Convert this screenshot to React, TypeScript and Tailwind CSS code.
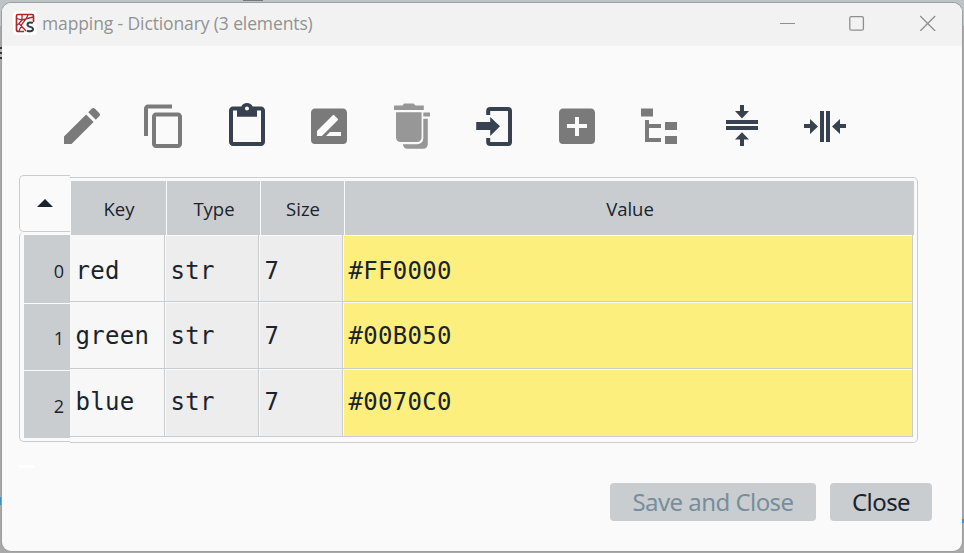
import type { ReactNode } from "react";

type Tone = "muted" | "faint" | "strong";

const toneClass: Record<Tone, string> = {
  muted: "text-[#7a7a7a]",
  faint: "text-[#979797]",
  strong: "text-[#37414f]",
};

const tools: { name: string; tone: Tone; box: number; art: ReactNode }[] = [
  {
    name: "Edit",
    tone: "muted",
    box: 24,
    art: (
      <path d="M3 17.25V21h3.75L17.81 9.94l-3.75-3.75L3 17.25zM20.71 7.04c.39-.39.39-1.02 0-1.41l-2.34-2.34c-.39-.39-1.02-.39-1.41 0l-1.83 1.83 3.75 3.75 1.83-1.83z" />
    ),
  },
  {
    name: "Copy",
    tone: "muted",
    box: 24,
    art: (
      <path d="M16 1.300H4c-1.100 0-2 .9-2 2v13.700h2V3.300h12v-2zm3 4H8c-1.100 0-2 .9-2 2V21c0 1.100.9 2 2 2h11c1.100 0 2-.9 2-2V7.300c0-1.100-.9-2-2-2zm0 15.700H8V7.300h11V21z" />
    ),
  },
  {
    name: "Paste",
    tone: "strong",
    box: 24,
    art: (
      <path d="M19 2.3h-4.18C14.4 1.1 13.3.5 12 .5c-1.3 0-2.4.6-2.82 1.8H5c-1.1 0-2 .9-2 2V20c0 1.1.9 2 2 2h14c1.1 0 2-.9 2-2V4.3c0-1.1-.9-2-2-2zm-7 0c.55 0 1 .45 1 1s-.45 1-1 1-1-.45-1-1 .45-1 1-1zM19 20H5V4.3h2v3.1h10V4.3h2V20z" />
    ),
  },
  {
    name: "Rename",
    tone: "muted",
    box: 24,
    art: (
      <path
        fillRule="evenodd"
        d="M18 17h-7.5l2-2H18zM6 17v-2.5l7.88-7.85c.19-.2.51-.2.71 0l1.76 1.76c.2.2.2.51 0 .71L8.47 17zM19 3.3H5c-1.1 0-2 .9-2 2V19a2 2 0 0 0 2 2h14a2 2 0 0 0 2-2V5.3c0-1.1-.9-2-2-2z"
      />
    ),
  },
  {
    name: "Remove",
    tone: "faint",
    box: 48,
    art: (
      <>
        <path d="M6 3.5h8.5l1.5-2h9.5l2 2h8.3v4.4H6zM8 10.2h25.6v25.3a4.5 4.5 0 0 1-4.5 4.5H12.500a4.500 4.500 0 0 1-4.500-4.500z" />
        <path d="M35.300 10.400h6.700v4.200h-6.700zM35.300 16.700h4.500V42.300a4.500 4.500 0 0 1-4.500 4.500H19.500a4.500 4.500 0 0 1-4.500-4.500h14.300a6 6 0 0 0 6-6z" />
      </>
    ),
  },
  {
    name: "Insert",
    tone: "strong",
    box: 48,
    art: (
      <>
        <path d="M16.200 13V9A4 4 0 0 1 20.200 5H38A4 4 0 0 1 42 9V40A4 4 0 0 1 38 44H20.200A4 4 0 0 1 16.200 40V36H20.200V40H38V9H20.200V13z" />
        <path d="M6.200 20H20.200V15L30 24.300 20.200 34V28H6.200z" />
      </>
    ),
  },
  {
    name: "Add",
    tone: "muted",
    box: 24,
    art: (
      <path d="M17 13h-4v4h-2v-4H7v-2h4V7.500h2V11h4zM19 3.300H5c-1.100 0-2 .9-2 2V19a2 2 0 0 0 2 2h14a2 2 0 0 0 2-2V5.300c0-1.100-.9-2-2-2z" fillRule="evenodd" />
    ),
  },
  {
    name: "View as tree",
    tone: "muted",
    box: 24,
    art: <path d="M3 3.300h6v4H3zM15 10h6v4h-6zM15 17h6v4h-6zM13 13H7v5h6v2H5V9h2v2h6z" />,
  },
  {
    name: "Fit rows",
    tone: "strong",
    box: 48,
    art: (
      <path d="M22 3h4v6h5l-7 7.500L17 9h5zM8 18h32v4H8zM8 24h32v4H8zM24 30.300l7 7.200h-5V44h-4v-6.500h-5z" />
    ),
  },
  {
    name: "Fit columns",
    tone: "strong",
    box: 48,
    art: (
      <path d="M4 22h6v-5l8 7.500-8 7.500v-6H4zM20 9h4v31h-4zM26 9h4v31h-4zM32 24.500l8-7.500v5h6v4h-6v6z" />
    ),
  },
];

const rows = [
  { index: 0, key: "red", type: "str", size: 7, value: "#FF0000", header: "h-[68px] pt-1", cells: "h-[67px] [&>*]:pt-[7px]" },
  { index: 1, key: "green", type: "str", size: 7, value: "#00B050", header: "h-[66px] pt-0.5", cells: "h-[67px] [&>*]:pt-[5px]" },
  { index: 2, key: "blue", type: "str", size: 7, value: "#0070C0", header: "h-[67px] pt-1", cells: "h-[68px] [&>*]:pt-[4px]" },
];

function AppLogo() {
  return (
    <svg className="size-6" viewBox="0 0 24 24" fill="none">
      <rect width="24" height="24" rx="3.500" fill="#fdfdfd" />
      <g stroke="#a8282c" strokeWidth="1.300">
        <path d="M20.500 11V5Q20.500 3.500 19 3.500H5Q3.500 3.500 3.500 5V18.500Q3.500 20.500 5.500 20.500H11" strokeWidth="1.700" />
        <path d="M4 7.500L9 9 20 6M9 4V9L6 12.500 4 14M15 4L13 8 9 13 6 20M6 12.500L13 20" />
      </g>
      <path
        d="M19.800 12.200C18 11 14.500 11.300 14.500 13.700 14.500 16.500 20 15.300 20 18.100 20 20.700 16 20.800 14 19.600"
        stroke="#343b43"
        strokeWidth="2"
      />
    </svg>
  );
}

function TitleBar() {
  return (
    <header className="flex h-[43px] shrink-0 items-start bg-[#f2f2f2] pl-[11px] pr-[26px]">
      <div className="mt-2">
        <AppLogo />
      </div>
      <h1 className="ml-[5px] mt-2 whitespace-nowrap font-['Open_Sans',sans-serif] text-[17.500px] leading-[25px] tracking-[-0.12px] text-[#929292]">
        mapping - Dictionary (3 elements)
      </h1>
      <div className="ml-auto mt-3 flex text-[#8f8f8f]">
        <svg className="size-4" viewBox="0 0 16 16" stroke="currentColor">
          <path d="M0 8.500h15" />
        </svg>
        <svg className="ml-[53px] size-4" viewBox="0 0 16 16" stroke="currentColor" fill="none" strokeWidth="1.300">
          <rect x=".8" y="1.600" width="13.600" height="13.600" rx="1.500" />
        </svg>
        <svg className="ml-[55px] size-4" viewBox="0 0 16 16" stroke="currentColor" strokeWidth="1.300">
          <path d="M.2 1l15 15M15.200 1L.2 16" />
        </svg>
      </div>
    </header>
  );
}

function Toolbar() {
  return (
    <div className="ml-14 mt-14 flex gap-[34.450px]">
      {tools.map((tool) => (
        <button key={tool.name} aria-label={tool.name} className={toneClass[tool.tone]}>
          <svg className="block size-12" viewBox={tool.box === 24 ? "0 0 24 24" : "0 0 48 48"} fill="currentColor">
            {tool.art}
          </svg>
        </button>
      ))}
    </div>
  );
}

function RowHeaders() {
  return (
    <div className="w-[51px] shrink-0">
      <div className="flex h-[57px] items-center justify-center rounded-l-[5px] border-y border-l border-[#c9cdd0] pb-0.5">
        <svg className="h-2 w-4" viewBox="0 0 16 8" fill="#19232d">
          <path d="M0 8L8 0l8 8z" />
        </svg>
      </div>
      <div className="h-[210px] rounded-l-[5px] border-b border-l border-[#c9cdd0] pl-1 pt-[3px]">
        {rows.map((row) => (
          <div
            key={row.index}
            className={`mb-px flex items-center justify-end bg-[#c9cdd0] pr-[6px] font-['Open_Sans',sans-serif] text-[18px] text-[#19232d] ${row.header}`}
          >
            {row.index}
          </div>
        ))}
      </div>
    </div>
  );
}

function DataGrid() {
  return (
    <div className="mt-0.5 h-[266px] w-[848px] rounded-r-[5px] border-y border-r border-[#c9cdd0] pt-[3px] font-['Open_Sans',sans-serif]">
      <div className="grid h-[54px] w-[844px] grid-cols-[95px_93px_83px_569px] gap-px pl-px text-[18.500px] text-[#19232d]">
        {["Key", "Type", "Size", "Value"].map((label) => (
          <div key={label} className="flex items-center justify-center bg-[#c9cdd0] pl-px pt-0.5">
            {label}
          </div>
        ))}
      </div>
      <div className="font-['DejaVu_Sans_Mono',monospace] text-[24px] leading-[58px] tracking-[0.3px] text-[#19232d]">
        {rows.map((row) => (
          <div
            key={row.key}
            className={`grid w-[843px] grid-cols-[95px_94px_84px_570px] [&>*]:border-b [&>*]:border-r [&>*]:border-[#c9cdd0] [&>*]:pl-[5.500px] ${row.cells}`}
          >
            <div className="bg-[#f7f7f7]">{row.key}</div>
            <div className="bg-[#ededed] shadow-[inset_1px_1px_#fafafa]">{row.type}</div>
            <div className="bg-[#ededed] shadow-[inset_1px_1px_#fafafa]">{row.size}</div>
            <div className="bg-[#fdef7e] shadow-[inset_1px_1px_#fafafa]">{row.value}</div>
          </div>
        ))}
      </div>
    </div>
  );
}

export default function App() {
  return (
    <div className="relative h-[553px] w-[964px] overflow-hidden bg-[#a9a9a9] bg-[linear-gradient(#bec3c6_0_26px,#a9a9a9_26px)] px-[2px] pb-[2px] pt-[3px]">
      <i className="absolute left-0 top-[47px] h-3 w-0.5 bg-[repeating-linear-gradient(#34363d_0_2px,#b5b5b5_2px_5px)]" />
      <i className="absolute left-0 top-[497px] h-2 w-px bg-[#3d8fc9]" />
      <i className="absolute bottom-[30px] right-0 h-1 w-0.5 bg-[#3d8fc9]" />
      <i className="absolute left-[243px] top-0 h-px w-5 bg-[#777]" />
      <main className="flex h-full flex-col overflow-hidden rounded-[9px] bg-[#fafafa] shadow-[0_0_0_1px_#9c9fa1]">
        <TitleBar />
        <Toolbar />
        <section className="ml-[17px] mt-[25px] flex">
          <RowHeaders />
          <DataGrid />
        </section>
        <div className="ml-[17px] mt-[22px] h-[3px] w-[15px] bg-white" />
        <footer className="mr-[30px] mt-[15px] flex justify-end gap-[14px] font-['Noto_Sans',sans-serif] text-[24px] leading-[38px] tracking-[-0.55px]">
          <button disabled className="h-[38px] w-[206px] rounded bg-[#c9cdd0] text-[#788d9c]">
            Save and Close
          </button>
          <button className="h-[38px] w-[102px] rounded bg-[#c9cdd0] text-[#19232d]">Close</button>
        </footer>
      </main>
    </div>
  );
}
